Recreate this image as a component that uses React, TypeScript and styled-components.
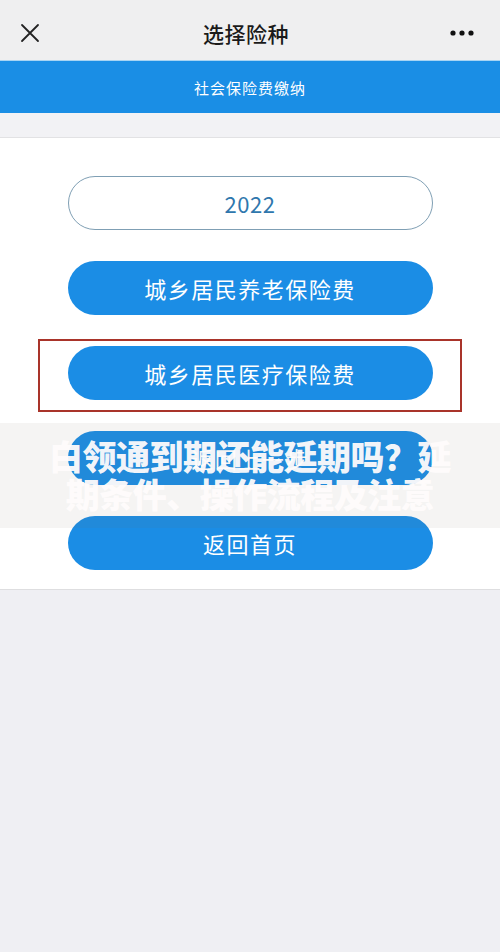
import React from 'react';
import styled, { createGlobalStyle } from 'styled-components';

const GlobalStyle = createGlobalStyle`
  html, body {
    margin: 0;
    padding: 0;
    background: #efeff3;
    font-family: "Noto Sans CJK SC", "Noto Sans", sans-serif;
  }
  * { box-sizing: border-box; }
`;

const Page = styled.div`
  position: relative;
  width: 500px;
  min-height: 952px;
  background: #efeff3;
`;

const NavBar = styled.div`
  height: 60px;
  display: flex;
  align-items: center;
  justify-content: space-between;
  padding: 6px 24px 0 16px;
  background: #efeff0;
`;

const NavTitle = styled.h1`
  margin: 0;
  font-size: 21px;
  font-weight: 500;
  color: #1a1a1a;
  letter-spacing: 0.5px;
`;

const IconSlot = styled.div`
  width: 28px;
  display: flex;
  align-items: center;
  justify-content: center;
`;

const Banner = styled.div`
  height: 53px;
  display: flex;
  align-items: center;
  justify-content: center;
  background: #1a8ee5;
  border-top: 1px solid #a8d4f3;
  color: #ffffff;
  font-size: 15px;
  letter-spacing: 1px;
`;

const Gap = styled.div`
  height: 24px;
  background: #f2f2f5;
`;

const Panel = styled.div`
  background: #ffffff;
  border-top: 1px solid #e2e2e4;
  border-bottom: 1px solid #dedee0;
  padding: 38px 0 19px;
  display: flex;
  flex-direction: column;
  align-items: center;
  gap: 31px;
`;

const PillButton = styled.button<{ $outline?: boolean }>`
  width: 365px;
  height: 54px;
  border-radius: 27px;
  font-family: inherit;
  font-size: ${(p) => (p.$outline ? '22px' : '22px')};
  letter-spacing: ${(p) => (p.$outline ? '0.5px' : '1.5px')};
  cursor: pointer;
  border: ${(p) => (p.$outline ? '1px solid #7f9fb4' : 'none')};
  background: ${(p) => (p.$outline ? '#ffffff' : '#1b8de5')};
  color: ${(p) => (p.$outline ? '#2f77ad' : '#ffffff')};
`;

const Highlight = styled.div`
  position: relative;

  &::after {
    content: '';
    position: absolute;
    top: -7px;
    bottom: -12px;
    left: -30px;
    right: -29px;
    border: 2px solid #a9342a;
    pointer-events: none;
  }
`;

const Watermark = styled.div`
  position: absolute;
  top: 423px;
  left: 0;
  right: 0;
  height: 105px;
  background: rgba(110, 100, 90, 0.07);
  overflow: hidden;
  display: flex;
  flex-direction: column;
  align-items: center;
  padding-top: 14px;
  pointer-events: none;
`;

const WatermarkLine = styled.div`
  white-space: nowrap;
  font-size: 34px;
  font-weight: 900;
  line-height: 38px;
  color: rgba(255, 252, 252, 0.96);
  letter-spacing: -0.5px;
`;

const CloseIcon = () => (
  <svg width="20" height="20" viewBox="0 0 20 20">
    <path d="M2 2 L18 18 M18 2 L2 18" stroke="#222" strokeWidth="1.8" strokeLinecap="round" />
  </svg>
);

const MoreIcon = () => (
  <svg width="24" height="8" viewBox="0 0 24 8">
    <circle cx="3" cy="4" r="2.6" fill="#111" />
    <circle cx="12" cy="4" r="2.6" fill="#111" />
    <circle cx="21" cy="4" r="2.6" fill="#111" />
  </svg>
);

export default function App() {
  return (
    <>
      <GlobalStyle />
      <Page>
        <NavBar>
          <IconSlot>
            <CloseIcon />
          </IconSlot>
          <NavTitle>选择险种</NavTitle>
          <IconSlot>
            <MoreIcon />
          </IconSlot>
        </NavBar>
        <Banner>社会保险费缴纳</Banner>
        <Gap />
        <Panel>
          <PillButton $outline>2022</PillButton>
          <PillButton>城乡居民养老保险费</PillButton>
          <Highlight>
            <PillButton>城乡居民医疗保险费</PillButton>
          </Highlight>
          <PillButton>返回上一步</PillButton>
          <PillButton>返回首页</PillButton>
        </Panel>
        <Watermark>
          <WatermarkLine>白领通到期还能延期吗？延</WatermarkLine>
          <WatermarkLine>期条件、操作流程及注意</WatermarkLine>
        </Watermark>
      </Page>
    </>
  );
}
